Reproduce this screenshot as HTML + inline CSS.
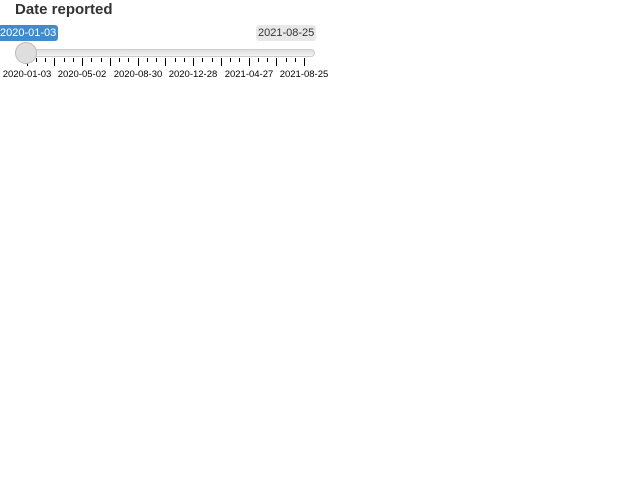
<!DOCTYPE html><html><head><style>
body{margin:0;background:#fff;font-family:"Liberation Sans",sans-serif;width:624px;height:500px;position:relative;overflow:hidden}
.t{position:absolute;left:15px;top:1px;font-weight:bold;font-size:15px;color:#333}
.from{position:absolute;left:-2px;top:25px;background:#428bca;color:#fff;font-size:11px;padding:1px 2px;border-radius:3px;line-height:14px}
.to{position:absolute;left:256px;top:25px;background:#e8e8e8;color:#333;font-size:11px;padding:1px 2px;border-radius:3px;line-height:14px}
.track{position:absolute;left:17px;top:49px;width:298px;height:8px;background:linear-gradient(#ddd,#f4f4f4);border:1px solid #ccc;box-sizing:border-box;border-radius:4px}
.h{position:absolute;left:15px;top:42px;width:22px;height:22px;border-radius:50%;background:#dedede;border:1px solid #bbb;box-sizing:border-box}
.k{position:absolute;top:58px;width:1px;background:#000}
.l{position:absolute;top:69px;font-size:9.5px;color:#000;width:60px;text-align:center}
</style></head><body>
<div class="t">Date reported</div>
<div class="from">2020-01-03</div>
<div class="to">2021-08-25</div>
<div class="track"></div>
<div id="ticks"></div>
<div class="h"></div>
<script>
var s='';
for(var i=0;i<=30;i++){var x=26.7+i*9.25;var tall=i%3==0;s+='<div class="k" style="left:'+Math.round(x)+'px;height:'+(tall?8:4)+'px"></div>';}
var L=['2020-01-03','2020-05-02','2020-08-30','2020-12-28','2021-04-27','2021-08-25'];
for(var j=0;j<6;j++){s+='<div class="l" style="left:'+Math.round(26.7+j*55.5-30)+'px">'+L[j]+'</div>';}
document.getElementById('ticks').innerHTML=s;
</script>
</body></html>
